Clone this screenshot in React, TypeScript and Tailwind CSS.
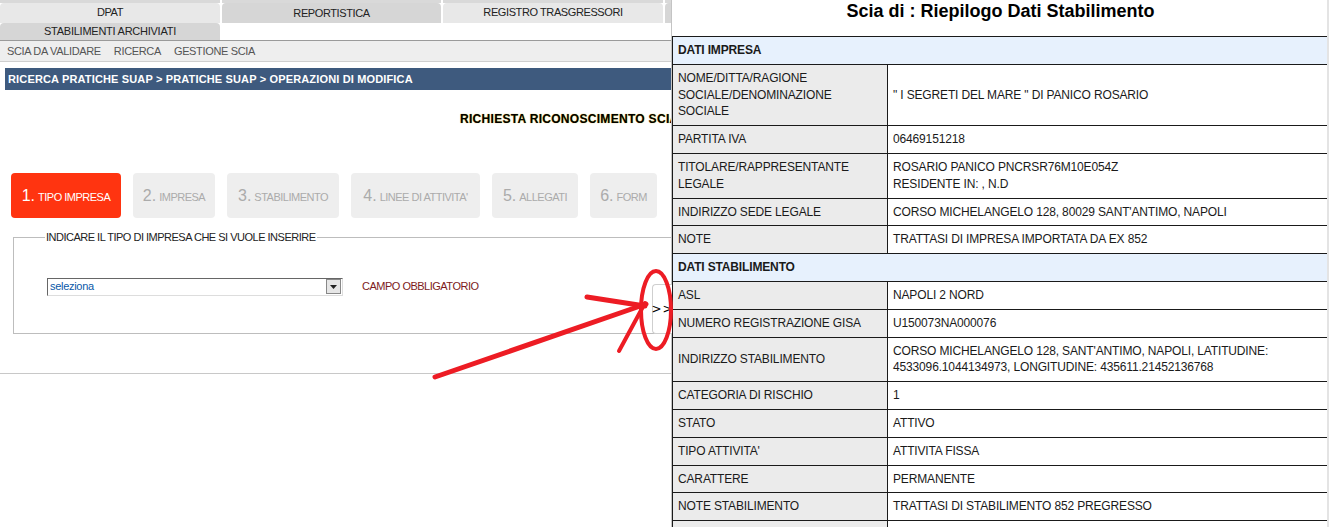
import React from "react";

const rows1: [string, React.ReactNode][] = [
  ["NOME/DITTA/RAGIONE SOCIALE/DENOMINAZIONE SOCIALE", "\" I SEGRETI DEL MARE \" DI PANICO ROSARIO"],
  ["PARTITA IVA", "06469151218"],
  ["TITOLARE/RAPPRESENTANTE LEGALE", (<>ROSARIO PANICO PNCRSR76M10E054Z<br />RESIDENTE IN: , N.D</>)],
  ["INDIRIZZO SEDE LEGALE", "CORSO MICHELANGELO 128, 80029 SANT'ANTIMO, NAPOLI"],
  ["NOTE", "TRATTASI DI IMPRESA IMPORTATA DA EX 852"],
];
const rows2: [string, React.ReactNode][] = [
  ["ASL", "NAPOLI 2 NORD"],
  ["NUMERO REGISTRAZIONE GISA", "U150073NA000076"],
  ["INDIRIZZO STABILIMENTO", "CORSO MICHELANGELO 128, SANT'ANTIMO, NAPOLI, LATITUDINE: 4533096.1044134973, LONGITUDINE: 435611.21452136768"],
  ["CATEGORIA DI RISCHIO", "1"],
  ["STATO", "ATTIVO"],
  ["TIPO ATTIVITA'", "ATTIVITA FISSA"],
  ["CARATTERE", "PERMANENTE"],
  ["NOTE STABILIMENTO", "TRATTASI DI STABILIMENTO 852 PREGRESSO"],
  ["\u00a0", "\u00a0"],
];

function Row({ k, v }: { k: string; v: React.ReactNode }) {
  return (
    <tr>
      <td className="border border-[#1a1a1a] bg-[#ebebeb] px-[5px] py-[5px] align-middle w-[215px]">{k}</td>
      <td className="border border-[#1a1a1a] bg-white px-[5px] py-[5px] align-middle">{v}</td>
    </tr>
  );
}

function Head({ t }: { t: string }) {
  return (
    <tr>
      <td colSpan={2} className="border border-[#1a1a1a] bg-[#e7f1fd] px-[5px] py-[5px] font-bold">{t}</td>
    </tr>
  );
}

const steps = [
  { n: "1.", t: "TIPO IMPRESA", w: "w-[110px]", active: true },
  { n: "2.", t: "IMPRESA", w: "w-[82px]" },
  { n: "3.", t: "STABILIMENTO", w: "w-[112px]" },
  { n: "4.", t: "LINEE DI ATTIVITA'", w: "w-[129px]" },
  { n: "5.", t: "ALLEGATI", w: "w-[86px]" },
  { n: "6.", t: "FORM", w: "w-[67px]" },
];

export default function App() {
  return (
    <div className="relative w-[1329px] h-[527px] overflow-hidden bg-white text-[11px] text-[#222] font-['Liberation_Sans',Arial,sans-serif]">
      {/* top strip */}
      <div className="flex gap-[2px] h-[3px]">
        <div className="w-[220px] bg-[#d9d9d9]" />
        <div className="w-[219px] bg-[#d9d9d9]" />
        <div className="w-[220px] bg-[#d9d9d9]" />
        <div className="w-[220px] bg-[#d9d9d9]" />
      </div>
      {/* tab row 1 */}
      <div className="flex gap-[2px] h-[20px] tracking-[-0.4px]">
        <div className="w-[220px] bg-[#e8e8e8] rounded-t-[4px] flex items-center justify-center pb-[2px]">DPAT</div>
        <div className="w-[219px] bg-[#d6d6d6] rounded-t-[4px] flex items-center justify-center pt-[1px]">REPORTISTICA</div>
        <div className="w-[220px] bg-[#e8e8e8] rounded-t-[4px] flex items-center justify-center pb-[2px]">REGISTRO TRASGRESSORI</div>
        <div className="w-[220px] bg-[#d6d6d6] rounded-t-[4px]" />
      </div>
      {/* tab row 2 */}
      <div className="flex h-[17px] tracking-[-0.25px]">
        <div className="w-[220px] bg-[#d6d6d6] rounded-t-[4px] flex items-center justify-center">STABILIMENTI ARCHIVIATI</div>
      </div>
      {/* submenu */}
      <div className="border-t border-[#9a9a9a] border-b border-b-[#cfcfcf] bg-[#eeeeee] h-[22px] flex items-center gap-[13px] pl-[7px] text-[#555] tracking-[-0.35px]">
        <span>SCIA DA VALIDARE</span>
        <span>RICERCA</span>
        <span>GESTIONE SCIA</span>
      </div>
      {/* breadcrumb */}
      <div className="mt-[6px] ml-[5px] h-[22px] bg-[#3e5a7e] flex items-center pl-[3px] text-white font-bold tracking-[0.15px]">
        RICERCA PRATICHE SUAP &gt; PRATICHE SUAP &gt; OPERAZIONI DI MODIFICA
      </div>
      {/* title */}
      <div className="mt-[22px] pl-[460px] h-[14px] leading-[14px] font-bold text-[12px] text-black tracking-[0.3px] [text-shadow:0_0_1px_#c9a400]">
        RICHIESTA RICONOSCIMENTO SCIA
      </div>
      {/* steps */}
      <div className="mt-[47px] ml-[11px] flex gap-[12px] h-[45px]">
        {steps.map((s) => (
          <div
            key={s.n}
            className={`${s.w} rounded-[4px] flex items-center justify-center gap-[3px] ${s.active ? "bg-[#ff3410] text-white" : "bg-[#eeeeee] text-[#ababab]"}`}
          >
            <span className="text-[16px]">{s.n}</span>
            <span className="text-[11px] pt-[3px] tracking-[-0.5px]">{s.t}</span>
          </div>
        ))}
      </div>
      {/* fieldset */}
      <fieldset className="mt-[11px] ml-[13px] mr-[20px] h-[105px] border border-[#bdbdbd] pl-[20px] pt-0 m-0">
        <legend className="px-[1px] ml-[11px] text-[11px] text-[#222] tracking-[-0.5px]">INDICARE IL TIPO DI IMPRESA CHE SI VUOLE INSERIRE</legend>
        <div className="mt-[32px] ml-[13px] flex items-center gap-[19px]">
          <div className="w-[296px] h-[18px] border border-[#666] border-r-[#ddd] border-b-[#ddd] bg-white flex items-center justify-between pl-[2px] pr-[1px]">
            <span className="text-[#0a58a8] tracking-[-0.3px]">seleziona</span>
            <span className="w-[15px] h-[15px] bg-[#e6e6e6] border border-[#888] flex items-center justify-center">
              <svg width="7" height="4" viewBox="0 0 7 4"><path d="M0 0h7L3.5 4z" fill="#222" /></svg>
            </span>
          </div>
          <span className="text-[#7d1b1b] tracking-[-0.5px]">CAMPO OBBLIGATORIO</span>
        </div>
      </fieldset>
      <div className="mt-[39px] border-t border-[#c8c8c8]" />

      {/* right slide panel */}
      <div className="absolute left-[671px] top-0 w-[658px] h-[527px] bg-white border-l border-[#c4c4c4] text-[12px] text-[#1a1a1a]">
        <div className="h-[36px] flex items-start justify-center font-bold text-[18px] text-black leading-[22px]">
          Scia di : Riepilogo Dati Stabilimento
        </div>
        <table className="w-[656px] border-collapse leading-[16.8px] tracking-[-0.15px]">
          <tbody>
            <Head t="DATI IMPRESA" />
            {rows1.map(([k, v]) => <Row key={k} k={k} v={v} />)}
            <Head t="DATI STABILIMENTO" />
            {rows2.map(([k, v], i) => <Row key={i} k={k} v={v} />)}
          </tbody>
        </table>
        <div className="absolute right-0 top-0 w-[2px] h-full bg-[#e4e4e4]" />
      </div>

      {/* >> toggle */}
      <div className="absolute left-[652px] top-[284px] w-[20px] h-[50px] bg-white border border-[#cfcfcf] border-r-0 rounded-l-[4px] flex items-center justify-center text-[12px] text-black font-['DejaVu_Sans',sans-serif] tracking-[1px]">
        &gt;&gt;
      </div>

      {/* red annotation */}
      <svg className="absolute left-0 top-0 pointer-events-none" width="1329" height="527">
        <g stroke="#ed1c24" strokeLinecap="round" fill="none">
          <line x1="435" y1="377" x2="646" y2="304" strokeWidth="5" />
          <line x1="587" y1="297" x2="645" y2="306" strokeWidth="5" />
          <line x1="619" y1="351" x2="645" y2="303" strokeWidth="4" />
          <ellipse cx="656" cy="310" rx="15" ry="39" strokeWidth="4" />
        </g>
      </svg>
    </div>
  );
}
